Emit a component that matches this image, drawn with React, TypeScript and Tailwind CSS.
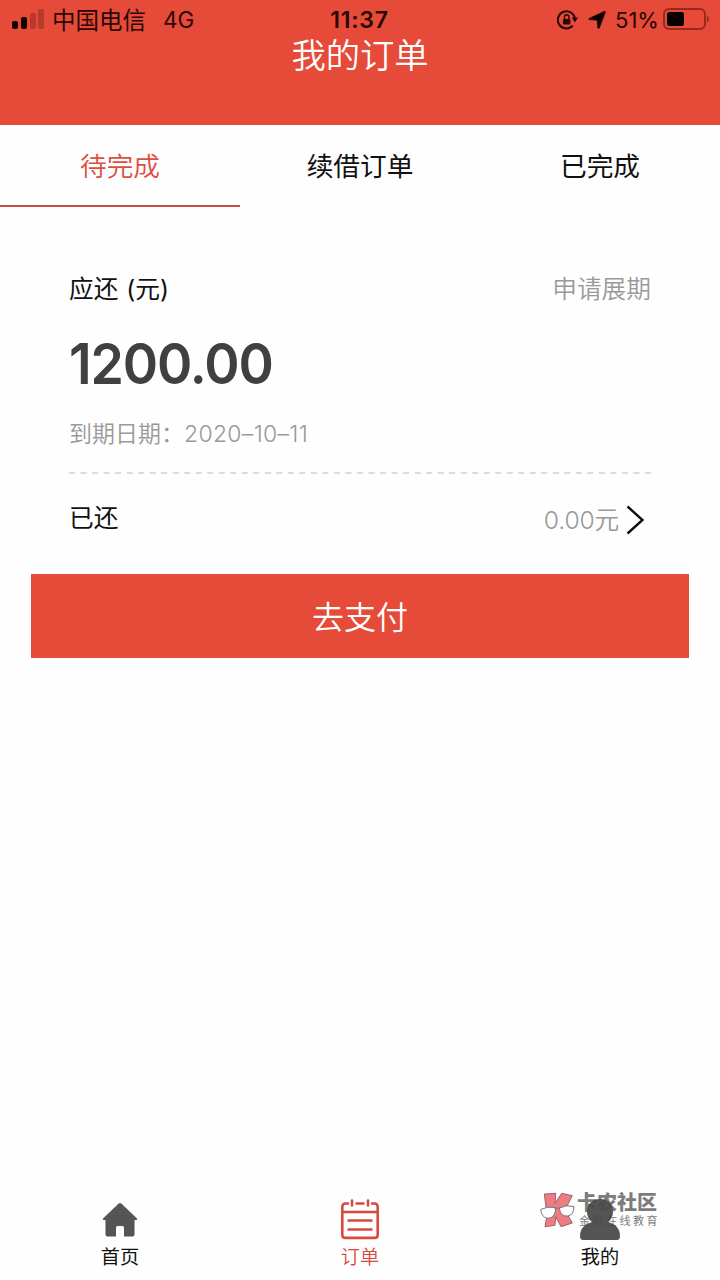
import clsx from "clsx";

const tabs = ["待完成", "续借订单", "已完成"];

const StatusBar = () => {
  return (
    <div className="flex h-10 items-center justify-between pl-3 pr-[11px] text-[#2a0705]">
      <div className="flex w-[240px] items-center">
        <svg width="32" height="20" viewBox="0 0 32 20" className="mb-[2px] shrink-0">
          <rect x="0" y="12" width="6" height="8" rx="2" fill="#120202" />
          <rect x="9" y="8" width="6" height="12" rx="2" fill="#120202" />
          <rect x="18" y="4" width="6" height="16" rx="2" fill="#b83a2d" />
          <rect x="26" y="0" width="6" height="20" rx="2" fill="#b83a2d" />
        </svg>
        <span className="ml-2 pt-px text-[23.5px] leading-10">中国电信</span>
        <span className="ml-[17px] text-[22.5px] leading-10">4G</span>
      </div>
      <div className="pr-[2px] text-[23px] font-semibold leading-10 tracking-[0.8px]">
        11:37
      </div>
      <div className="flex w-[240px] items-center justify-end">
        <svg width="21" height="20" viewBox="0 0 21 20" fill="none">
          <path
            d="M15.8 15.6A8.6 8.6 0 1 1 18 9"
            stroke="currentColor"
            strokeWidth="2"
          />
          <path d="M14.8 7.6h6.2l-3.1 4.8z" fill="currentColor" />
          <rect x="6" y="9" width="7.4" height="5.5" rx="1" fill="currentColor" />
          <path
            d="M7.5 9V7a2.2 2.2 0 0 1 4.4 0v2"
            stroke="currentColor"
            strokeWidth="1.4"
          />
        </svg>
        <svg width="18" height="18" viewBox="0 0 18 18" className="ml-[10px]">
          <path
            d="M17.4.9 11.4 17q-1 1-1.6-.1L9.2 9.200 1 8.600q-1-.5 0-1.100L16.6.3q1-.1.8.6z"
            fill="#120202"
            stroke="#120202"
            strokeWidth=".6"
          />
        </svg>
        <span className="ml-[9px] text-[22px] leading-10">51%</span>
        <svg width="46" height="22" viewBox="0 0 46 22" className="mb-[2px] ml-[4px]">
          <rect
            x="1"
            y="1"
            width="41"
            height="20"
            rx="5"
            fill="none"
            stroke="#98291f"
            strokeWidth="2"
          />
          <rect x="4" y="4" width="17" height="14" rx="2.5" fill="#080101" />
          <path d="M44 7.5q2 1 2 3.5t-2 3.5z" fill="#98291f" />
        </svg>
      </div>
    </div>
  );
};

const Watermark = () => {
  return (
    <div className="absolute left-[540px] top-[12px] flex">
      <svg width="36" height="38" viewBox="0 0 36 38">
        <path
          d="M4.300 2 15.700 1.300 15 11.300 21.700 1.300 32.300 3.700 25 18 32.300 31 21 34.700 15.700 24.700 15 33.300 5 34.700 7 23z"
          fill="#ee7c83"
          stroke="#8f5a5e"
          strokeWidth=".9"
        />
        <path
          d="M.7 17.500q6.500-3.500 14.500-2 1 4-1.200 7.500-2.500 4-7 3.200Q1.500 25 .7 17.500zM19.300 16q7-3.500 14.700-1.500-.2 8.500-6 9.500-7.500 1-8.700-8z"
          fill="#fff"
          stroke="#777"
        />
        <path d="M15 17q2-1.500 4.300-1" fill="none" stroke="#777" />
      </svg>
      <div className="pl-px text-[#7c7c7c]">
        <div className="h-[23px] text-[20px] font-black leading-[22px]">
          卡农社区
        </div>
        <div className="pl-[2px] text-[11px] leading-[12px] tracking-[2.5px]">
          金融在线教育
        </div>
      </div>
    </div>
  );
};

const BottomNav = () => {
  return (
    <div className="relative flex h-[100px] pt-[19px] text-[19.2px]">
      <Watermark />
      <div className="flex flex-1 flex-col items-center">
        <svg width="40" height="42" viewBox="0 0 40 42">
          <path
            d="M18.700 4.500q1.300-1.200 2.600 0L37 19.500q.8 1.500-1 1.500h-1.500v14.500q0 2-2 2H24v-9q0-1.500-1.500-1.500h-5Q16 27 16 28.500v9H7.500q-2 0-2-2V21H4q-1.800 0-1-1.500z"
            fill="#555"
          />
        </svg>
        <span className="leading-8">首页</span>
      </div>
      <div className="flex flex-1 flex-col items-center text-[#d84a3d]">
        <svg
          width="40"
          height="42"
          viewBox="0 0 40 42"
          fill="none"
          stroke="currentColor"
          strokeWidth="2.6"
          strokeLinecap="round"
        >
          <path d="M8 4.500H5.500q-3.200 0-3.200 3.200v28q0 3.200 3.200 3.200h29q3.200 0 3.200-3.200v-28q0-3.200-3.200-3.200H32M16.500 4.500h7M12 1.500v5M28 1.500v5M3 13h34M8.500 21.500h23M8.500 30.500h23" />
        </svg>
        <span className="font-[350] leading-8">订单</span>
      </div>
      <div className="relative flex flex-1 flex-col items-center">
        <svg width="40" height="42" viewBox="0 0 40 42">
          <path
            d="M20 0C11.500 0 7 6 7 13c0 4 2 8 5 10C4 25 0 30 0 37q0 4 3 4h34q3 0 3-4c0-7-4-12-12-14 3-2 5-6 5-10C33 6 28.500 0 20 0z"
            fill="#484848"
            fillOpacity=".93"
          />
        </svg>
        <span className="leading-8">我的</span>
      </div>
    </div>
  );
};

const App = () => {
  return (
    <div className="flex h-[1280px] w-[720px] flex-col overflow-hidden bg-[#fefefe] font-['Inter','Noto_Sans_CJK_SC',sans-serif] text-[#111]">
      <header className="h-[125px] bg-[#e54b38]">
        <StatusBar />
        <h1 className="-mt-[4px] text-center text-[34.3px] font-[350] leading-10 text-white">
          我的订单
        </h1>
      </header>

      <div className="grid h-[82px] grid-cols-3 text-center text-[26.7px]">
        {tabs.map((tab, index) => (
          <div
            key={tab}
            className={clsx(
              "border-b-2 pt-[2px] leading-[78px]",
              index === 0
                ? "border-[#c84d40] font-[350] text-[#dc4e40]"
                : "border-transparent"
            )}
          >
            {tab}
          </div>
        ))}
      </div>

      <div className="mx-[69px] pt-[62px]">
        <div className="flex justify-between text-[24.7px] leading-10">
          <span>
            应还<span className="ml-px"> (元)</span>
          </span>
          <span className="font-[350] text-[#999]">申请展期</span>
        </div>
        <div className="mt-[23px] origin-left scale-x-[0.94] text-[57px] font-semibold leading-[64px] tracking-[-1.2px] text-[#404040]">
          1200.00
        </div>
        <div className="mt-[18px] text-[23px] font-[350] leading-10 text-[#999]">
          到期日期：<span className="tracking-[0.3px]">2020–10–11</span>
        </div>
        <svg width="582" height="2" className="mt-[18px] block">
          <path
            d="M0 1h582"
            stroke="#dcdcdc"
            strokeWidth="2"
            strokeDasharray="6 5.52"
          />
        </svg>
        <div className="mt-6 flex h-11 items-center justify-between text-[24.7px]">
          <span className="pb-[3px]">已还</span>
          <div className="flex items-center font-[350] text-[#999]">
            <span className="pt-px tracking-[-0.2px]">0.00元</span>
            <svg
              width="18"
              height="30"
              viewBox="0 0 18 30"
              className="ml-[7px] mr-[7px]"
            >
              <path
                d="M1.500 1.500 16.500 15 1.500 28.500"
                fill="none"
                stroke="#111"
                strokeWidth="2.4"
              />
            </svg>
          </div>
        </div>
      </div>

      <button className="mx-[31px] mt-8 h-[84px] bg-[#e54b38] pt-[4px] text-[32px] font-[350] text-white">
        去支付
      </button>

      <div className="flex-1" />
      <BottomNav />
    </div>
  );
};

export default App;
